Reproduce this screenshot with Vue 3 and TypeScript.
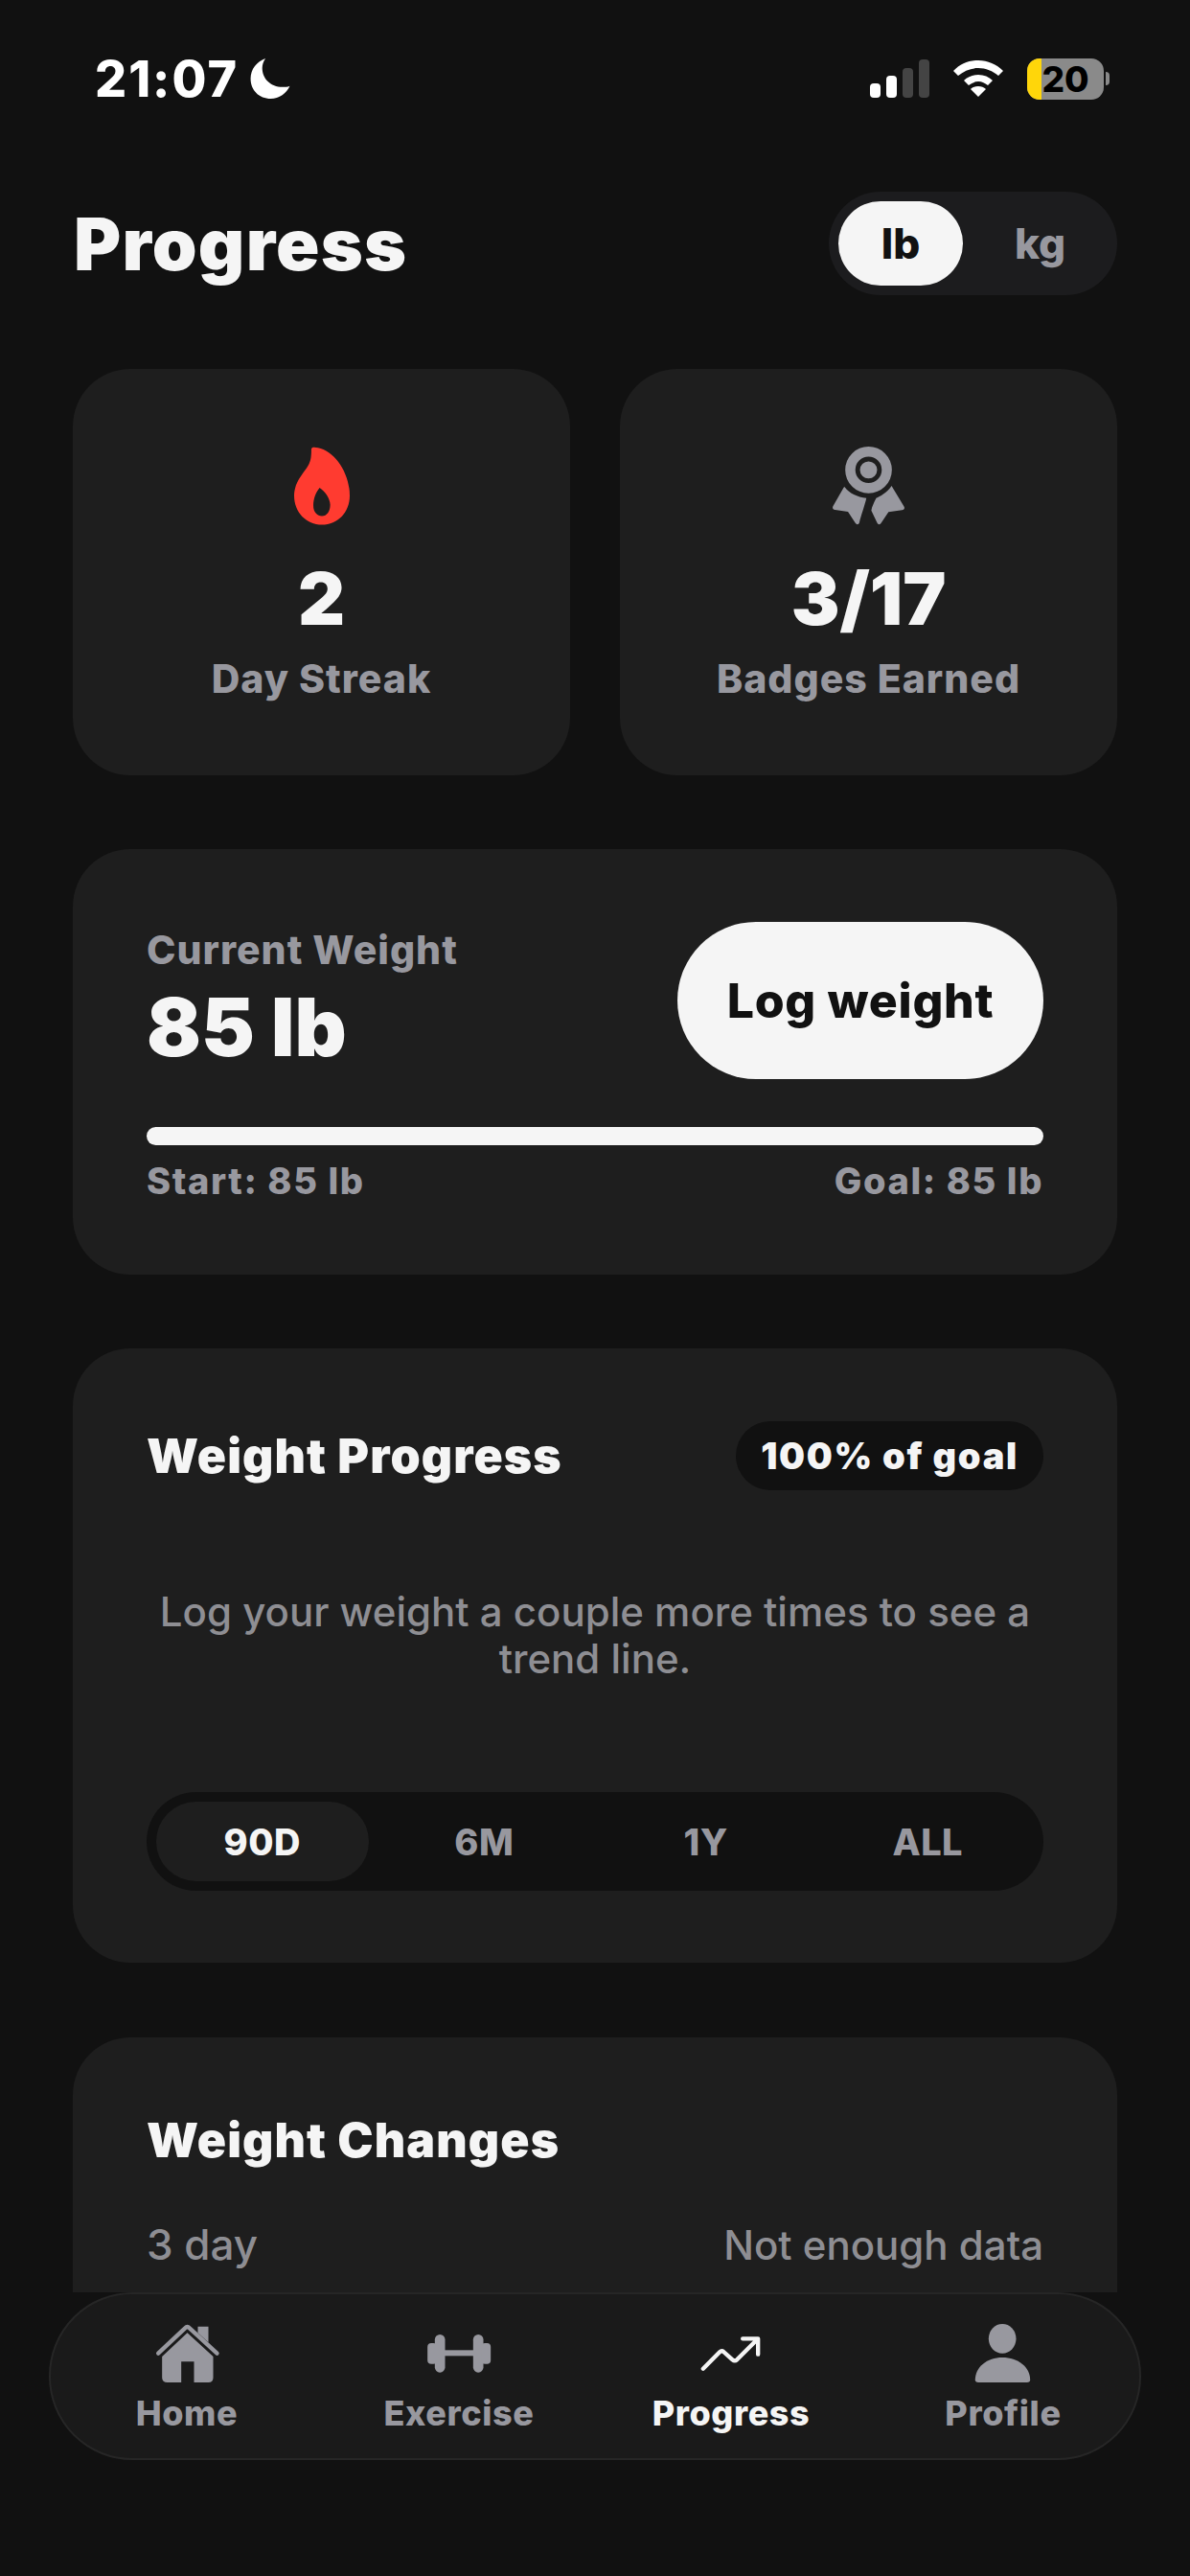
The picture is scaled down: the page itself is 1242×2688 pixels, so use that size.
<script setup lang="ts">
const ranges = ['90D', '6M', '1Y', 'ALL']
const selectedRange = '90D'
</script>

<template>
  <div class="screen">
    <div class="scroll">
      <div class="status">
        <div class="status-left">
          <span class="clock">21:07</span>
          <svg class="moon" viewBox="1 1 37 38"><path d="M15 1C7 4 1 11 1 20c0 11 8 19 19 19 8 0 15-5 18-12-2 1-5 1-7 1-11 0-19-8-19-18 0-3 1-6 3-9z" fill="#fff" /></svg>
        </div>
        <div class="status-right">
          <div class="signal">
            <i class="bar on b1"></i>
            <i class="bar on b2"></i>
            <i class="bar b3"></i>
            <i class="bar b4"></i>
          </div>
          <svg class="wifi" viewBox="0 0 54 40">
            <path d="M1 12C8 5 17 1 27 1s19 4 26 11l-5 5c-6-5-13-8-21-8S12 12 6 17z" fill="#fff" />
            <path d="M12 22c4-4 9-6 15-6s11 2 15 6l-5 5c-3-2-6-4-10-4s-7 2-10 4z" fill="#fff" />
            <path d="M19 31c2-2 5-3 8-3s6 1 8 3l-8 8z" fill="#fff" />
          </svg>
          <div class="battery">
            <div class="battery-body">
              <i class="battery-fill"></i>
              <span class="battery-num">20</span>
            </div>
            <i class="battery-cap"></i>
          </div>
        </div>
      </div>

      <header class="page-head">
        <h1>Progress</h1>
        <div class="unit-toggle">
          <span class="unit unit-active">lb</span>
          <span class="unit">kg</span>
        </div>
      </header>

      <section class="stat-row">
        <div class="card stat">
          <svg class="stat-icon flame" viewBox="113 52 168 237">
            <path fill-rule="evenodd" d="M165 60C165 52 175 53 185 55C235 65 281 130 281 200C281 250 245 288 197 288C150 288 113 250 113 200C113 160 140 135 155 110C165 95 165 75 165 60ZM190 176C178 190 171 210 171 230C171 250 183 262 197 262C212 262 222 248 222 228C222 208 205 185 190 176Z" fill="#ff3b30" />
          </svg>
          <div class="stat-value">2</div>
          <div class="stat-label">Day Streak</div>
        </div>
        <div class="card stat">
          <svg class="stat-icon badge" viewBox="78 44 238 256">
            <path fill-rule="evenodd" d="M197 44a76 76 0 1 0 0 152a76 76 0 1 0 0-152ZM197 77a43 43 0 1 1 0 86a43 43 0 1 1 0-86ZM197 92a28 28 0 1 0 0 56a28 28 0 1 0 0-56Z" fill="#98989f" />
            <path d="M118 174C133 196 160 208 190 212C185 235 172 270 167 292C164 299 158 299 154 293L130 256L88 250C80 249 78 244 82 237Z" fill="#98989f" />
            <path d="M272 172C258 194 235 206 222 212C215 226 208 240 206 252L225 292C228 299 235 299 238 293L262 257L306 251C314 250 316 244 312 238Z" fill="#98989f" />
          </svg>
          <div class="stat-value">3/17</div>
          <div class="stat-label">Badges Earned</div>
        </div>
      </section>

      <section class="card weight">
        <div class="weight-top">
          <div>
            <div class="weight-label">Current Weight</div>
            <div class="weight-value">85 lb</div>
          </div>
          <button class="log-btn">Log weight</button>
        </div>
        <div class="track"></div>
        <div class="track-labels">
          <span>Start: 85 lb</span>
          <span>Goal: 85 lb</span>
        </div>
      </section>

      <section class="card chart">
        <div class="card-head">
          <h2>Weight Progress</h2>
          <span class="goal-pill">100% of goal</span>
        </div>
        <p class="empty">Log your weight a couple more times to see a trend line.</p>
        <div class="ranges">
          <span
            v-for="r in ranges"
            :key="r"
            :class="['range', { 'range-active': r === selectedRange }]"
          >{{ r }}</span>
        </div>
      </section>

      <section class="card changes">
        <h2>Weight Changes</h2>
        <div class="change-row">
          <span class="change-name">3 day</span>
          <span>Not enough data</span>
        </div>
      </section>
    </div>

    <nav class="tabbar">
      <div class="tab">
        <svg class="tab-icon" viewBox="-4.5 0 330 255" fill="#98989f">
          <path d="M71 122L155 43Q162 36 169 43L255 122" fill="none" stroke="#98989f" stroke-width="13" stroke-linecap="round" stroke-linejoin="round" />
          <path d="M195 38H228V88L195 58Z" />
          <path d="M162 58L243 132V198Q243 213 228 213H183V148H143V213H100Q83 213 83 198V132Z" />
        </svg>
        <span>Home</span>
      </div>
      <div class="tab">
        <svg class="tab-icon" viewBox="-4.5 0 330 255" fill="#98989f">
          <rect x="62" y="90" width="30" height="65" rx="12" />
          <rect x="85" y="63" width="32" height="119" rx="16" />
          <rect x="115" y="112" width="92" height="18" />
          <rect x="205" y="63" width="32" height="119" rx="16" />
          <rect x="230" y="90" width="30" height="65" rx="12" />
        </svg>
        <span>Exercise</span>
      </div>
      <div class="tab tab-active">
        <svg class="tab-icon" viewBox="-4.5 0 330 255">
          <path d="M73 170L125 118Q131 112 137 117L165 142Q172 148 179 142L243 78M197 76H245V125" fill="none" stroke="#f5f5f5" stroke-width="13" stroke-linecap="round" stroke-linejoin="round" />
        </svg>
        <span>Progress</span>
      </div>
      <div class="tab">
        <svg class="tab-icon" viewBox="10.5 0 330 255" fill="#98989f">
          <ellipse cx="173" cy="76" rx="43" ry="46" />
          <path d="M88 205C88 165 125 135 173 135C222 135 260 165 260 205Q260 213 250 213H98Q88 213 88 205Z" />
        </svg>
        <span>Profile</span>
      </div>
    </nav>
  </div>
</template>

<style>
body {
  margin: 0;
  background: #111111;
}
</style>

<style scoped>
.screen {
  position: relative;
  width: 1242px;
  height: 2688px;
  overflow: hidden;
  background: #111111;
  color: #f5f5f5;
  font-family: Inter, "Liberation Sans", sans-serif;
}
.scroll {
  height: 2392px;
  overflow: hidden;
  box-sizing: border-box;
  padding: 0 76px;
}
.status {
  display: flex;
  justify-content: space-between;
  align-items: center;
  height: 56px;
  margin: 0 8px 0 23px;
  padding-top: 54px;
  box-sizing: content-box;
}
.status-left {
  display: flex;
  align-items: center;
  gap: 11px;
}
.clock {
  color: #fff;
  font-size: 52px;
  font-weight: 800;
  letter-spacing: 2px;
}
.moon {
  width: 44px;
  height: 42px;
}
.status-right {
  display: flex;
  align-items: center;
  gap: 24px;
}
.signal {
  display: flex;
  align-items: flex-end;
  gap: 6px;
  height: 40px;
}
.bar {
  width: 11px;
  border-radius: 4px;
  background: #444;
}
.bar.on {
  background: #fff;
}
.b1 { height: 15px; }
.b2 { height: 23px; }
.b3 { height: 31px; }
.b4 { height: 40px; }
.wifi {
  width: 54px;
  height: 40px;
}
.battery {
  display: flex;
  align-items: center;
  gap: 2px;
}
.battery-body {
  position: relative;
  display: flex;
  align-items: center;
  justify-content: center;
  width: 80px;
  height: 43px;
  border-radius: 13px;
  overflow: hidden;
  background: #8a8a8a;
}
.battery-fill {
  position: absolute;
  left: 0;
  top: 0;
  bottom: 0;
  width: 15px;
  background: #ffd60a;
}
.battery-num {
  position: relative;
  color: #000;
  font-size: 37px;
  font-weight: 800;
}
.battery-cap {
  width: 4px;
  height: 14px;
  border-radius: 0 6px 6px 0;
  background: #8a8a8a;
}
.page-head {
  display: flex;
  justify-content: space-between;
  align-items: center;
  margin-top: 90px;
}
h1 {
  margin: 0 0 0 1px;
  font-size: 75px;
  font-weight: 900;
  letter-spacing: 1.2px;
}
.unit-toggle {
  display: flex;
  width: 301px;
  box-sizing: border-box;
  padding: 10px;
  border-radius: 54px;
  background: #1c1c1e;
}
.unit {
  flex: 1;
  height: 88px;
  display: flex;
  align-items: center;
  justify-content: center;
  border-radius: 44px;
  padding-left: 10px;
  color: #98989f;
  font-size: 44px;
  font-weight: 800;
}
.unit-active {
  flex: 0 0 130px;
  padding-left: 0;
  background: #f5f5f5;
  color: #111;
}
.card {
  border-radius: 60px;
  background: #1e1e1e;
  box-sizing: border-box;
}
.stat-row {
  display: grid;
  grid-template-columns: 1fr 1fr;
  gap: 52px;
  margin-top: 77px;
}
.stat {
  height: 424px;
  display: flex;
  flex-direction: column;
  align-items: center;
  padding-top: 81px;
}
.stat-icon {
  display: block;
  height: 82px;
}
.flame {
  width: 58px;
}
.badge {
  width: 79px;
}
.stat-value {
  margin-top: 33px;
  font-size: 76px;
  font-weight: 900;
  line-height: 87px;
}
.stat-label {
  margin-top: 17px;
  color: #98989f;
  font-size: 41px;
  font-weight: 800;
  letter-spacing: 1px;
  line-height: 46px;
}
.weight {
  margin-top: 77px;
  height: 444px;
  padding: 76px 77px;
}
.weight-top {
  display: flex;
  justify-content: space-between;
}
.weight-label {
  margin-top: 6px;
  color: #98989f;
  font-size: 41px;
  font-weight: 800;
  letter-spacing: 1px;
  line-height: 46px;
}
.weight-value {
  margin-top: 8px;
  font-size: 84px;
  font-weight: 900;
  line-height: 100px;
}
.log-btn {
  width: 382px;
  height: 164px;
  border: none;
  border-radius: 82px;
  background: #f5f5f5;
  color: #111;
  font-family: inherit;
  font-size: 50px;
  font-weight: 800;
  letter-spacing: 0.7px;
}
.track {
  height: 19px;
  margin-top: 50px;
  border-radius: 10px;
  background: #f5f5f5;
}
.track-labels {
  display: flex;
  justify-content: space-between;
  margin-top: 15px;
  color: #98989f;
  font-size: 38px;
  font-weight: 800;
  letter-spacing: 1.6px;
  line-height: 44px;
}
.chart {
  margin-top: 77px;
  height: 641px;
  padding: 76px 77px;
}
.card-head {
  display: flex;
  justify-content: space-between;
  align-items: center;
}
h2 {
  margin: 0;
  font-size: 50px;
  font-weight: 900;
  letter-spacing: 1.1px;
  line-height: 72px;
}
.goal-pill {
  padding: 0 26px;
  height: 72px;
  display: flex;
  align-items: center;
  border-radius: 36px;
  background: #111111;
  font-size: 38px;
  font-weight: 900;
  letter-spacing: 1.7px;
}
.empty {
  margin: 102px 0 0;
  color: #8e8e93;
  font-size: 42px;
  font-weight: 500;
  line-height: 49px;
  text-align: center;
}
.ranges {
  display: grid;
  grid-template-columns: repeat(4, 1fr);
  gap: 10px;
  height: 103px;
  margin-top: 115px;
  padding: 10px;
  box-sizing: border-box;
  border-radius: 52px;
  background: #111111;
}
.range {
  display: flex;
  align-items: center;
  justify-content: center;
  border-radius: 42px;
  color: #98989f;
  font-size: 38px;
  font-weight: 800;
  letter-spacing: 0.5px;
}
.range-active {
  background: #1e1e1e;
  color: #f5f5f5;
}
.changes {
  margin-top: 78px;
  height: 400px;
  padding: 71px 77px;
}
.change-row {
  display: flex;
  justify-content: space-between;
  align-items: baseline;
  margin-top: 49px;
  color: #8e8e93;
  font-size: 42px;
  font-weight: 500;
  line-height: 48px;
}
.change-name {
  font-size: 44px;
}
.tabbar {
  position: absolute;
  left: 51px;
  top: 2392px;
  width: 1140px;
  height: 175px;
  box-sizing: border-box;
  display: grid;
  grid-template-columns: repeat(4, 1fr);
  padding: 21px 0 0;
  border: 2px solid #262626;
  border-radius: 87px;
  background: #1a1a1a;
}
.tab {
  display: flex;
  flex-direction: column;
  align-items: center;
  color: #98989f;
  font-size: 36px;
  font-weight: 800;
  letter-spacing: 0.6px;
  line-height: 42px;
}
.tab-active {
  color: #f5f5f5;
}
.tab-icon {
  width: 110px;
  height: 85px;
  margin-bottom: -3px;
}
</style>
